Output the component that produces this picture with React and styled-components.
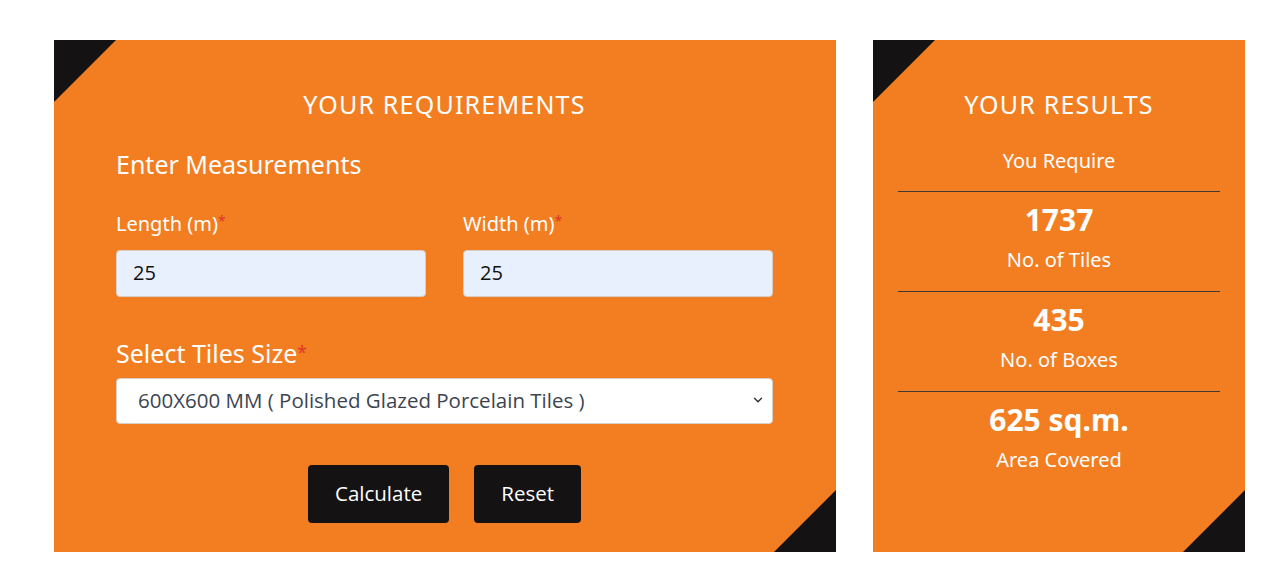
import { useState } from 'react'
import styled, { createGlobalStyle } from 'styled-components'
import { ChevronDown } from 'lucide-react'

const GlobalStyle = createGlobalStyle`
  body {
    margin: 0;
    background: #FFFFFF;
    font-family: 'Noto Sans', 'Open Sans', sans-serif;
  }
`

const Page = styled.div`
  display: flex;
  gap: 37px;
  padding: 40px 37px 30px 54px;
`

const Panel = styled.div`
  background-color: #F27E21;
  color: #FFFFFF;
  height: 512px;
  box-sizing: border-box;
  overflow: hidden;
  position: relative;
  width: ${props => props.width}px;
  padding: ${props => props.pad};

  &::before,
  &::after {
    content: '';
    position: absolute;
    width: 62px;
    height: 62px;
    background: #141213;
  }
  &::before {
    top: 0;
    left: 0;
    clip-path: polygon(0 0, 100% 0, 0 100%);
  }
  &::after {
    bottom: 0;
    right: 0;
    clip-path: polygon(100% 0, 100% 100%, 0 100%);
  }
`

const Title = styled.h2`
  font-size: 25px;
  font-weight: 400;
  line-height: 26px;
  margin: 0 0 ${props => props.gap || 34}px;
  text-align: center;
  letter-spacing: 1.2px;
`

const SubHeading = styled.h3`
  font-size: 25px;
  font-weight: 400;
  line-height: 26px;
  margin: ${props => props.margin};
`

const Row = styled.div`
  display: grid;
  grid-template-columns: 1fr 1fr;
  gap: 37px;
`

const Field = styled.div`
  display: flex;
  flex-direction: column;
`

const Label = styled.label`
  font-size: 20px;
  line-height: 26px;
  margin-bottom: 13px;
`

const Star = styled.span`
  color: #E0352B;
  font-size: .7em;
  vertical-align: top;
  line-height: 1.4;
`

const Input = styled.input`
  box-sizing: border-box;
  height: 47px;
  width: 100%;
  background: #E8F0FE;
  border: 1px solid #D6CFC8;
  border-radius: 4px;
  padding: 0 16px 3px;
  font-family: 'Open Sans', sans-serif;
  font-size: 20px;
  color: #111111;
  outline: none;
`

const SelectWrap = styled.div`
  position: relative;
`

const Select = styled.select`
  appearance: none;
  box-sizing: border-box;
  height: 46px;
  width: 100%;
  background: #FFFFFF;
  border: 1px solid #D6CFC8;
  border-radius: 4px;
  padding: 0 21px 3px;
  font-family: 'Open Sans', sans-serif;
  font-size: 20.5px;
  color: #3D4550;
  outline: none;
`

const Chevron = styled(ChevronDown)`
  position: absolute;
  right: 8px;
  top: 15px;
  color: #333333;
  pointer-events: none;
`

const Buttons = styled.div`
  display: flex;
  justify-content: center;
  gap: 25px;
  margin-top: 41px;
`

const Button = styled.button`
  background-color: #141213;
  border: none;
  border-radius: 4px;
  color: #FFFFFF;
  cursor: pointer;
  font-family: 'Open Sans', sans-serif;
  font-size: 20.5px;
  height: 58px;
  padding: 0 27px 2px;
`

const Text = styled.div`
  font-size: 20px;
  line-height: 26px;
  text-align: center;
  margin-bottom: ${props => props.gap || 0}px;
`

const Divider = styled.hr`
  border: none;
  border-top: 1px solid #3F3A36;
  margin: 0;
`

const Result = styled.div`
  padding: 11px 0 18px;
  text-align: center;
`

const Value = styled.div`
  font-size: 30px;
  font-weight: 700;
  line-height: 34px;
  margin-bottom: 10px;
`

export default function App() {
  const [length, setLength] = useState('25')
  const [width, setWidth] = useState('25')

  const results = [
    { value: '1737', label: 'No. of Tiles' },
    { value: '435', label: 'No. of Boxes' },
    { value: '625 sq.m.', label: 'Area Covered' }
  ]

  return (
    <Page>
      <GlobalStyle />
      <Panel width={782} pad="51px 63px 0 62px">
        <Title>YOUR REQUIREMENTS</Title>
        <SubHeading margin="0 0 34px">Enter Measurements</SubHeading>
        <Row>
          <Field>
            <Label>Length (m)<Star>*</Star></Label>
            <Input value={length} onChange={e => setLength(e.target.value)} />
          </Field>
          <Field>
            <Label>Width (m)<Star>*</Star></Label>
            <Input value={width} onChange={e => setWidth(e.target.value)} />
          </Field>
        </Row>
        <SubHeading margin="43px 0 12px">Select Tiles Size<Star>*</Star></SubHeading>
        <SelectWrap>
          <Select defaultValue="600">
            <option value="600">600X600 MM ( Polished Glazed Porcelain Tiles )</option>
          </Select>
          <Chevron size={14} strokeWidth={2.5} />
        </SelectWrap>
        <Buttons>
          <Button>Calculate</Button>
          <Button>Reset</Button>
        </Buttons>
      </Panel>
      <Panel width={372} pad="51px 25px 0">
        <Title gap={31}>YOUR RESULTS</Title>
        <Text gap={17}>You Require</Text>
        {results.map(r => (
          <div key={r.label}>
            <Divider />
            <Result>
              <Value>{r.value}</Value>
              <Text>{r.label}</Text>
            </Result>
          </div>
        ))}
      </Panel>
    </Page>
  )
}
